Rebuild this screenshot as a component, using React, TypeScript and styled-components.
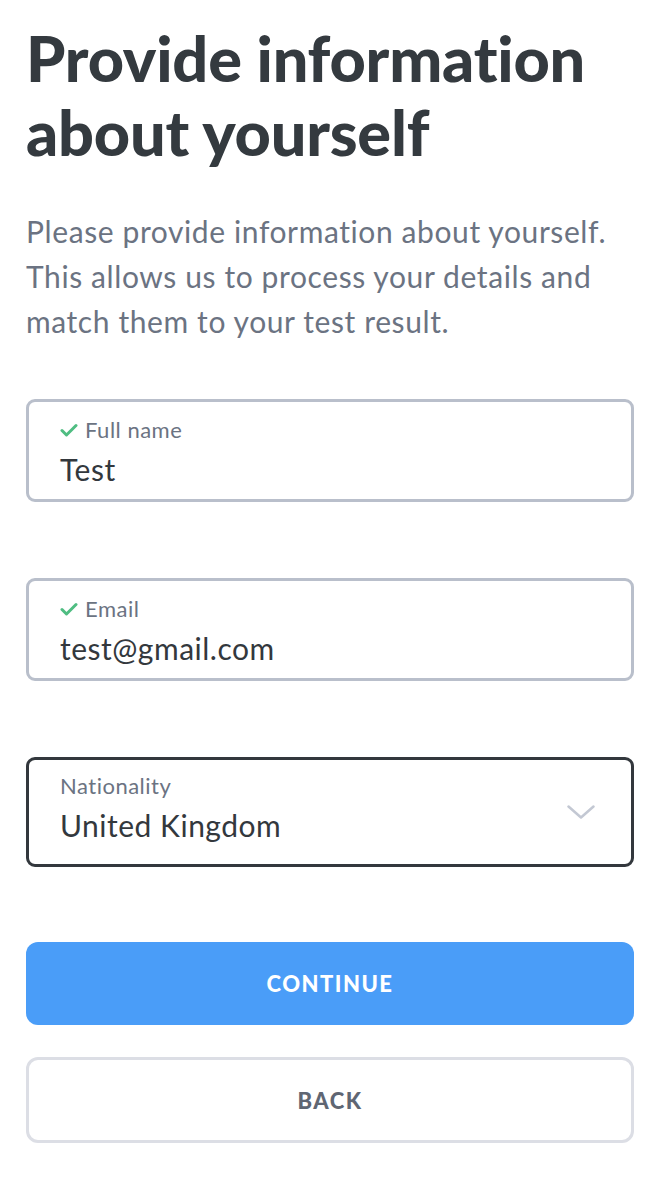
import React from "react";
import styled, { createGlobalStyle } from "styled-components";

const Global = createGlobalStyle`
  html, body { margin: 0; padding: 0; background: #ffffff; }
  body { font-family: "Lato", "Noto Sans", sans-serif; -webkit-font-smoothing: antialiased; }
  * { box-sizing: border-box; }
`;

const Page = styled.main`
  padding: 21px 20px 40px 26px;
  display: flex;
  flex-direction: column;
`;

const Title = styled.h1`
  margin: 0;
  font-family: "Lato", sans-serif;
  font-weight: 900;
  font-size: 63px;
  line-height: 74px;
  color: #343a3f;
  letter-spacing: -0.2px;
`;

const Lead = styled.p`
  margin: 40px 0 0;
  font-size: 30px;
  line-height: 45px;
  letter-spacing: 0.6px;
  color: #6b7382;
  font-weight: 400;
`;

const Form = styled.div`
  margin-top: 55px;
  display: flex;
  flex-direction: column;
  gap: 76px;
`;

const Field = styled.div<{ $active?: boolean }>`
  height: ${(p) => (p.$active ? 110 : 103)}px;
  border: 3px solid ${(p) => (p.$active ? "#33383d" : "#b9bfcb")};
  border-radius: 9px;
  padding: ${(p) => (p.$active ? "11px" : "13px")} 36px 0 31px;
  display: flex;
  align-items: center;
  background: #fff;
`;

const FieldBody = styled.div`
  flex: 1;
  display: flex;
  flex-direction: column;
  align-self: flex-start;
`;

const Label = styled.div`
  display: flex;
  align-items: center;
  gap: 7px;
  font-size: 22px;
  line-height: 30px;
  letter-spacing: 0.5px;
  color: #6b7382;
`;

const Value = styled.div`
  font-size: 30px;
  line-height: 40px;
  letter-spacing: 0.5px;
  margin-top: 4px;
  color: #33383d;
`;

const Chevron = styled.svg`
  width: 28px;
  height: 15px;
  margin-top: -10px;
`;

const Actions = styled.div`
  margin-top: 75px;
  display: flex;
  flex-direction: column;
  gap: 32px;
`;

const Button = styled.button<{ $primary?: boolean }>`
  height: ${(p) => (p.$primary ? 83 : 86)}px;
  border-radius: 12px;
  border: ${(p) => (p.$primary ? "none" : "3px solid #dcdee5")};
  background: ${(p) => (p.$primary ? "#4a9df8" : "#ffffff")};
  color: ${(p) => (p.$primary ? "#ffffff" : "#5f6673")};
  font-family: "Lato", sans-serif;
  font-weight: 900;
  font-size: 22px;
  letter-spacing: 1.5px;
  text-transform: uppercase;
  width: 100%;
  cursor: pointer;
`;

const Check = () => (
  <svg width="18" height="14" viewBox="0 0 18 14" aria-hidden>
    <path d="M2 7.5 L6.5 12 L16 2.5" fill="none" stroke="#4fbd82" strokeWidth="3" strokeLinecap="round" strokeLinejoin="round" />
  </svg>
);

export default function App() {
  return (
    <>
      <Global />
      <Page>
        <Title>
          Provide information
          <br />
          about yourself
        </Title>
        <Lead>
          Please provide information about yourself.
          <br />
          This allows us to process your details and
          <br />
          match them to your test result.
        </Lead>
        <Form>
          <Field>
            <FieldBody>
              <Label>
                <Check />
                Full name
              </Label>
              <Value>Test</Value>
            </FieldBody>
          </Field>
          <Field>
            <FieldBody>
              <Label>
                <Check />
                Email
              </Label>
              <Value>test@gmail.com</Value>
            </FieldBody>
          </Field>
          <Field $active>
            <FieldBody>
              <Label>Nationality</Label>
              <Value>United Kingdom</Value>
            </FieldBody>
            <Chevron viewBox="0 0 28 15" aria-hidden>
              <path d="M1.5 1.5 L14 12.5 L26.5 1.5" fill="none" stroke="#c3c8d3" strokeWidth="2.5" strokeLinecap="round" strokeLinejoin="round" />
            </Chevron>
          </Field>
        </Form>
        <Actions>
          <Button $primary>Continue</Button>
          <Button>Back</Button>
        </Actions>
      </Page>
    </>
  );
}
